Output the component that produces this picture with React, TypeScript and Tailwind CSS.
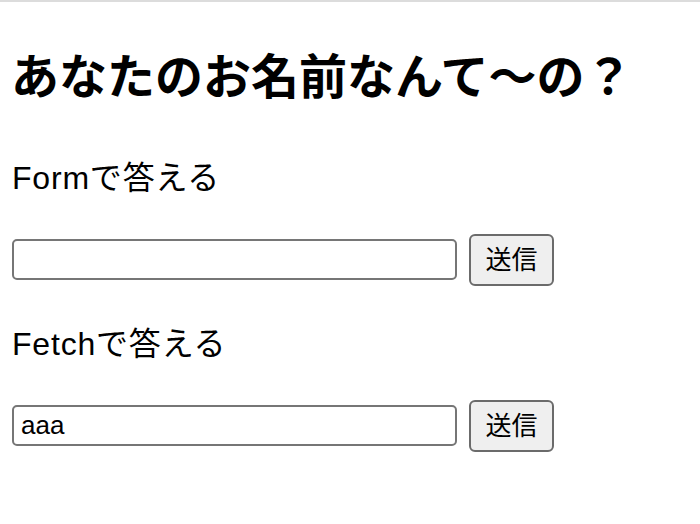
import React, { useState } from 'react';

const font = '"Liberation Sans", "Noto Sans CJK JP", sans-serif';

const AnswerRow: React.FC<{ label: string; initial?: string }> = ({ label, initial = '' }) => {
    const [value, setValue] = useState(initial);
    return (
        <section>
            <p className="mt-[51px] text-[32px] leading-[40px] tracking-[0.8px] text-black">{label}</p>
            <form className="mt-[36px] flex items-start gap-[12px]" onSubmit={(e) => e.preventDefault()}>
                <input
                    type="text"
                    value={value}
                    onChange={(e) => setValue(e.target.value)}
                    className="mt-[5px] w-[445px] h-[41px] px-[7px] text-[26px] text-black bg-white border-2 border-[#767676] rounded-[5px] outline-none"
                />
                <button
                    type="submit"
                    className="w-[85px] h-[52px] text-[26px] text-black bg-[#efefef] border-2 border-[#6b6b6b] rounded-[6px]"
                >
                    送信
                </button>
            </form>
        </section>
    );
};

export default function App() {
    return (
        <div className="min-h-[524px] bg-white" style={{ fontFamily: font }}>
            <div className="h-[2px] bg-[#dcdcdc]" />
            <div className="px-[12px]">
                <h1 className="mt-[47px] -ml-[1px] text-[48px] leading-[58px] font-bold text-black">
                    あなたのお名前なんて〜の？
                </h1>
                <AnswerRow label="Formで答える" />
                <div className="-mt-[13px]">
                    <AnswerRow label="Fetchで答える" initial="aaa" />
                </div>
            </div>
        </div>
    );
}
